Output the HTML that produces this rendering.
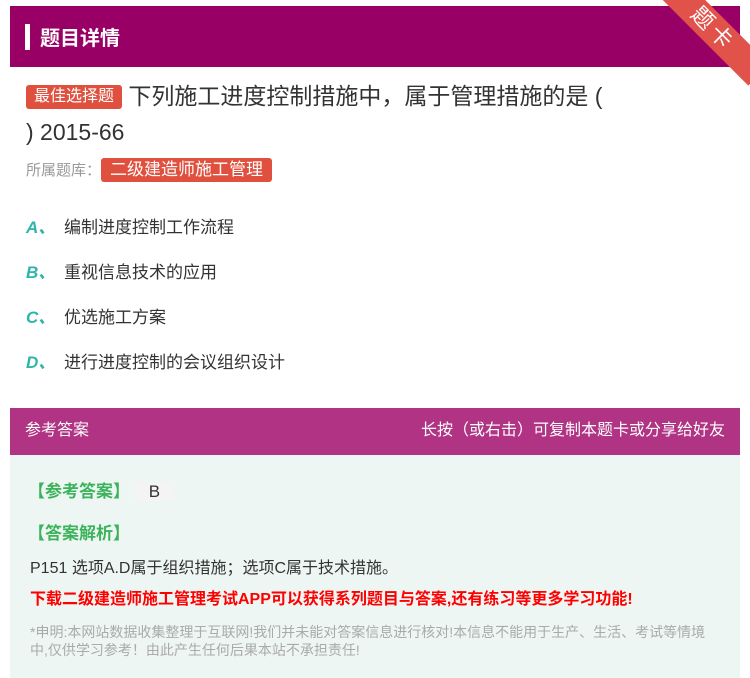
<!DOCTYPE html>
<html><head><meta charset="utf-8"><style>
*{margin:0;padding:0;box-sizing:border-box}
body{width:750px;height:678px;background:#fff;font-family:"Liberation Sans","Noto Sans CJK SC",sans-serif;position:relative;overflow:hidden}
.hd{position:absolute;left:10px;top:6px;width:730px;height:61px;background:#990065}
.hd .bar{position:absolute;left:15px;top:18px;width:5px;height:26px;background:#fff}
.hd .t{position:absolute;left:30px;top:16px;color:#fff;font-size:20px;font-weight:bold}
.rib{position:absolute;right:-28px;top:14px;width:130px;height:30px;background:#e0524a;transform:rotate(45deg);color:#fff;font-size:22px;text-align:center;line-height:30px;letter-spacing:4px}
.q{position:absolute;left:26px;top:78px;font-size:23px;color:#333;line-height:36px;width:660px}
.badge{display:inline-block;background:#e0503f;color:#fff;font-size:16px;line-height:24px;padding:0 8px;border-radius:3px;vertical-align:3px}
.lib{position:absolute;left:26px;top:158px;font-size:15px;color:#999}
.lib .badge{vertical-align:0;font-size:17px;padding:0 9px}
.op{position:absolute;left:26px;font-size:17px;color:#333}
.op b{color:#2cb5a8;font-style:italic;display:inline-block;width:38px}
.ah{position:absolute;left:10px;top:408px;width:730px;height:47px;background:#b03384;color:#fff;font-size:16px;line-height:45px;padding:0 15px}
.ah span{float:right}
.ab{position:absolute;left:10px;top:455px;width:730px;height:223px;background:#eef6f4}
.g{color:#3bb35a;font-size:17px;font-weight:bold;position:absolute;left:18px}
.ex{position:absolute;left:20px;top:99px;font-size:16px;color:#333}
.red{position:absolute;left:20px;top:130px;font-size:16px;color:#f00;font-weight:bold}
.dis{position:absolute;left:20px;top:168px;width:690px;font-size:14px;color:#aaa;line-height:18px}
</style></head><body>
<div class="hd"><div class="bar"></div><div class="t">题目详情</div></div>
<div class="rib">题卡</div>
<div class="q"><span class="badge">最佳选择题</span> 下列施工进度控制措施中，属于管理措施的是 (<br>) 2015-66</div>
<div class="lib">所属题库：<span class="badge">二级建造师施工管理</span></div>
<div class="op" style="top:213px"><b>A、</b>编制进度控制工作流程</div>
<div class="op" style="top:258px"><b>B、</b>重视信息技术的应用</div>
<div class="op" style="top:303px"><b>C、</b>优选施工方案</div>
<div class="op" style="top:348px"><b>D、</b>进行进度控制的会议组织设计</div>
<div class="ah">参考答案<span>长按（或右击）可复制本题卡或分享给好友</span></div>
<div class="ab">
<div class="g" style="top:22px">【参考答案】 <span style="color:#333;font-weight:normal;background:#f4f4f4;padding:0 14px">B</span></div>
<div class="g" style="top:64px">【答案解析】</div>
<div class="ex">P151 选项A.D属于组织措施；选项C属于技术措施。</div>
<div class="red">下载二级建造师施工管理考试APP可以获得系列题目与答案,还有练习等更多学习功能!</div>
<div class="dis">*申明:本网站数据收集整理于互联网!我们并未能对答案信息进行核对!本信息不能用于生产、生活、考试等情境中,仅供学习参考！由此产生任何后果本站不承担责任!</div>
</div>
</body></html>
